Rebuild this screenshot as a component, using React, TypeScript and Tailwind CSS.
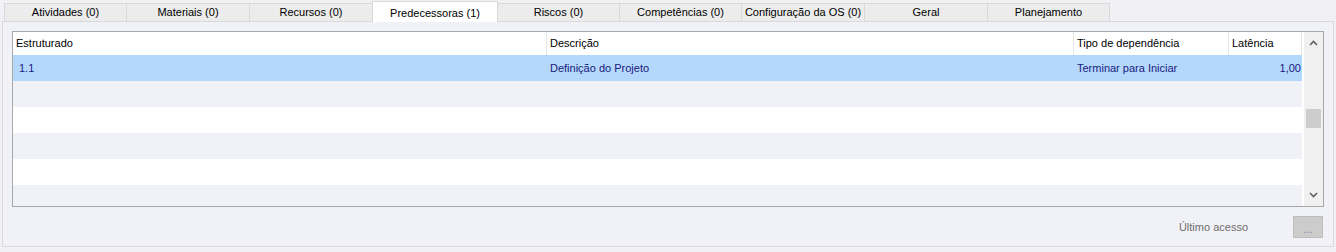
import React from "react";

const tabs: { t: string; w: string }[] = [
  { t: "Atividades (0)", w: "w-[123px] border-l" },
  { t: "Materiais (0)", w: "w-[123px]" },
  { t: "Recursos (0)", w: "w-[123px]" },
  { t: "Predecessoras (1)", w: "" },
  { t: "Riscos (0)", w: "w-[122px]" },
  { t: "Competências (0)", w: "w-[122px]" },
  { t: "Configuração da OS (0)", w: "w-[123px]" },
  { t: "Geral", w: "w-[123px]" },
  { t: "Planejamento", w: "w-[122px]" },
];

function Chevron({ up }: { up?: boolean }) {
  return (
    <svg width="9" height="6" viewBox="0 0 9 6">
      <polyline
        points={up ? "1,5 4.5,1.5 8,5" : "1,1 4.5,4.5 8,1"}
        fill="none"
        stroke="#606060"
        strokeWidth="1.6"
      />
    </svg>
  );
}

export default function App() {
  const emptyRows = [0, 1, 2, 3, 4];
  return (
    <div className="w-[1336px] h-[252px] bg-[#f0f0f5] font-['Liberation_Sans',sans-serif] text-[11px] text-black pt-[1px] overflow-hidden">
      <div className="flex items-end h-[21px] pl-[4px] relative z-10">
        {tabs.map((tab, i) =>
          i === 3 ? (
            <div
              key={tab.t}
              className="w-[126px] h-[21px] -ml-px bg-white border border-b-0 border-[#d9d9d9] flex items-start justify-center pt-[3px] relative z-10"
            >
              {tab.t}
            </div>
          ) : (
            <div
              key={tab.t}
              className={`${tab.w} h-[19px] bg-[#ececec] border-y border-r border-[#d9d9d9] flex items-center justify-center`}
            >
              {tab.t}
            </div>
          )
        )}
      </div>
      <div className="mx-[2px] -mt-px h-[226px] border border-[#d9d9d9] bg-[#f1f2f7] px-[9px] pt-[9px] flex flex-col">
        <div className="h-[176px] shrink-0 border border-[#a8a8a8] bg-white flex overflow-hidden">
          <div className="flex-1 flex flex-col overflow-hidden">
            <div className="h-[23px] shrink-0 flex bg-white">
              <div className="w-[534px] pl-[3px] flex items-center border-r border-[#e6e6e6]">Estruturado</div>
              <div className="w-[527px] pl-[3px] flex items-center border-r border-[#e6e6e6]">Descrição</div>
              <div className="w-[155px] pl-[3px] flex items-center border-r border-[#e6e6e6]">Tipo de dependência</div>
              <div className="flex-1 pl-[3px] flex items-center border-r border-[#e6e6e6]">Latência</div>
            </div>
            <div className="h-[26px] shrink-0 flex bg-[#b3d8fb] text-[#1a1a80]">
              <div className="w-[534px] pl-[6px] flex items-center">1.1</div>
              <div className="w-[527px] pl-[3px] flex items-center">Definição do Projeto</div>
              <div className="w-[155px] pl-[3px] flex items-center">Terminar para Iniciar</div>
              <div className="flex-1 pr-[1px] flex items-center justify-end">1,00</div>
            </div>
            {emptyRows.map((r) => (
              <div
                key={r}
                className={r % 2 === 0 ? "h-[26px] shrink-0 bg-[#f1f2f7]" : "h-[26px] shrink-0 bg-white"}
              />
            ))}
          </div>
          <div className="w-[19px] ml-[2px] bg-[#f0f0f0] flex flex-col items-center">
            <div className="h-[22px] flex items-center justify-center">
              <Chevron up />
            </div>
            <div className="h-[55px]" />
            <div className="w-[15px] h-[19px] bg-[#cdcdcd]" />
            <div className="flex-1" />
            <div className="h-[22px] flex items-center justify-center">
              <Chevron />
            </div>
          </div>
        </div>
        <div className="flex justify-end items-center mt-[9px] pr-[1px]">
          <span className="text-[#6d6d6d] mr-[45px]">Último acesso</span>
          <div className="w-[30px] h-[22px] bg-[#cccccc] border border-[#bdbdbd] flex items-center justify-center text-[#8a8aa0] leading-none pt-[4px]">
            ...
          </div>
        </div>
      </div>
    </div>
  );
}
